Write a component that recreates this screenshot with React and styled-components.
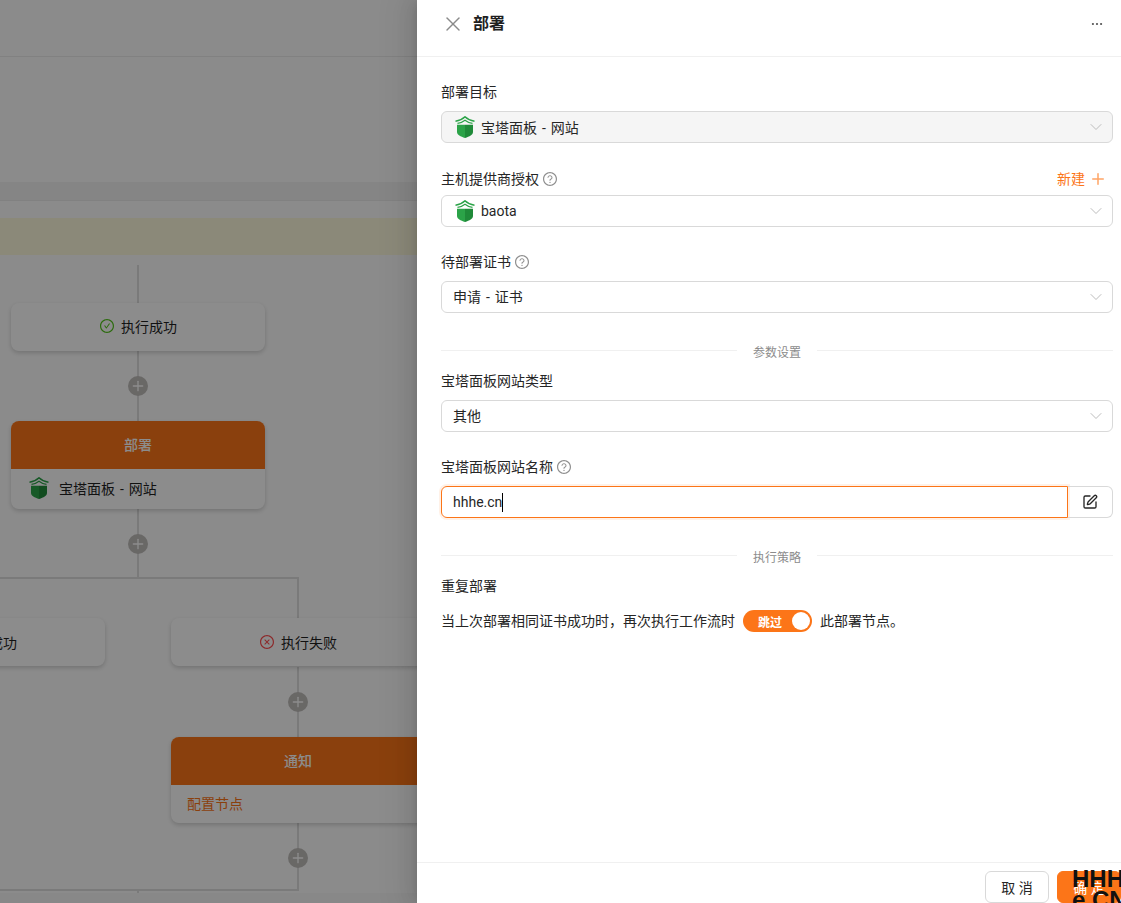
import React from "react";
import styled, { createGlobalStyle } from "styled-components";
import { X, Ellipsis, ChevronDown, Plus, SquarePen } from "lucide-react";
import { AiOutlineQuestionCircle, AiOutlineCheckCircle, AiOutlineCloseCircle } from "react-icons/ai";

const orange = "#fc7518";

const GlobalStyle = createGlobalStyle`
  html, body {
    margin: 0;
    padding: 0;
    overflow: hidden;
  }
  * {
    box-sizing: border-box;
  }
  body {
    font-family: Roboto, "Noto Sans CJK SC", sans-serif;
    font-size: 14px;
    word-spacing: 1.5px;
    color: #1f1f1f;
  }
`;

const Page = styled.div`
  position: relative;
  width: 1121px;
  height: 903px;
  overflow: hidden;
  background: #fefefe;
  display: flex;
  flex-direction: column;
`;

const TopBar = styled.div`
  height: 57px;
  border-bottom: 1px solid #ececec;
`;

const Intro = styled.div`
  height: 125px;
`;

const Band = styled.div`
  height: 19px;
  background: #f2f2f2;
  border-bottom: 1px solid #ececec;
`;

const Gap = styled.div`
  height: 17px;
`;

const Banner = styled.div`
  height: 37px;
  background: #fdf9dc;
`;

const Diagram = styled.div`
  position: relative;
  height: 638px;
`;

const FootBand = styled.div`
  flex: 1;
  background: #f7f7f7;
`;

const VLine = styled.div`
  position: absolute;
  left: ${(p) => p.$x - 1}px;
  top: ${(p) => p.$y - 255}px;
  width: 2px;
  height: ${(p) => p.$h}px;
  background: #dedede;
`;

const HLine = styled.div`
  position: absolute;
  left: 0;
  top: ${(p) => p.$y - 255}px;
  width: 299px;
  height: 2px;
  background: #dedede;
`;

const Node = styled.div`
  position: absolute;
  left: ${(p) => p.$x}px;
  top: ${(p) => p.$y - 255}px;
  width: 254px;
  border-radius: 8px;
  background: #fff;
  box-shadow: 0 2px 5px rgba(0, 0, 0, 0.18);
  overflow: hidden;
`;

const BranchBody = styled.div`
  height: 48px;
  padding-bottom: ${(p) => p.$lift ?? 2}px;
  display: flex;
  align-items: center;
  justify-content: center;
  gap: 6px;
  svg {
    color: ${(p) => p.$color};
  }
`;

const NodeHead = styled.div`
  height: 48px;
  padding-bottom: 2px;
  background: ${orange};
  color: #fff;
  font-weight: 500;
  display: flex;
  align-items: center;
  justify-content: center;
`;

const NodeBody = styled.div`
  height: ${(p) => p.$h}px;
  padding-left: ${(p) => p.$pad}px;
  padding-bottom: 2px;
  display: flex;
  align-items: center;
  gap: 10px;
`;

const Pending = styled.span`
  color: ${orange};
`;

const AddDot = styled.div`
  position: absolute;
  left: ${(p) => p.$x - 10}px;
  top: ${(p) => p.$y - 265}px;
  width: 20px;
  height: 20px;
  border-radius: 50%;
  background: #c0bdbb;
  color: #fff;
  display: flex;
  align-items: center;
  justify-content: center;
`;

const Mask = styled.div`
  position: absolute;
  inset: 0;
  background: rgba(0, 0, 0, 0.45);
`;

const Drawer = styled.aside`
  position: absolute;
  top: 0;
  right: 0;
  bottom: 0;
  width: 704px;
  background: #fff;
  display: flex;
  flex-direction: column;
  box-shadow: -6px 0 16px 0 rgba(0, 0, 0, 0.08), -3px 0 6px -4px rgba(0, 0, 0, 0.12), -9px 0 28px 8px rgba(0, 0, 0, 0.05);
`;

const DrawerHead = styled.header`
  height: 57px;
  flex: none;
  padding: 0 17px 9px 24px;
  border-bottom: 1px solid #f0f0f0;
  display: flex;
  align-items: center;
  gap: 8px;
  > svg:first-child {
    color: #8a8a8a;
  }
  > svg:last-child {
    margin-left: auto;
    color: #555;
  }
`;

const Title = styled.h2`
  margin: 0;
  font-size: 16px;
  line-height: 24px;
  font-weight: 600;
  color: #1f1f1f;
`;

const DrawerBody = styled.div`
  flex: 1;
  padding: 24px 8px 0 24px;
`;

const Item = styled.div`
  margin-bottom: ${(p) => p.$after ?? 24}px;
`;

const LabelRow = styled.div`
  height: 22px;
  margin-bottom: ${(p) => p.$gap ?? 8}px;
  line-height: 22px;
  display: flex;
  align-items: center;
  gap: 3px;
  color: #262626;
  > svg {
    color: #8f8f8f;
  }
`;

const NewLink = styled.span`
  margin-left: auto;
  margin-right: 6px;
  display: flex;
  align-items: center;
  gap: 4px;
  color: ${orange};
  svg {
    color: #ffa465;
  }
`;

const Select = styled.div`
  height: 32px;
  padding: 0 6px 0 ${(p) => (p.$logo ? 13 : 11)}px;
  border: 1px solid #d9d9d9;
  border-radius: 6px;
  background: ${(p) => (p.$disabled ? "#f5f5f5" : "#fff")};
  display: flex;
  align-items: center;
  gap: 6px;
  color: #262626;
  > svg:last-child {
    margin-left: auto;
    color: #bdbdbd;
  }
`;

const SelectText = styled.span`
  margin-bottom: 2px;
`;

const Divider = styled.div`
  height: 22px;
  margin: 26px 0 9px;
  display: flex;
  align-items: center;
  color: #8c8c8c;
  font-size: 12px;
  &::before,
  &::after {
    content: "";
    flex: 1;
    height: 1px;
    background: #f0f0f0;
  }
  span {
    padding: 2px 16px 0;
  }
`;

const InputGroup = styled.div`
  display: flex;
  height: 32px;
`;

const Input = styled.div`
  flex: 1;
  padding: 0 11px;
  border: 1px solid ${orange};
  border-radius: 6px 0 0 6px;
  box-shadow: 0 0 0 2px rgba(252, 117, 24, 0.1);
  display: flex;
  align-items: center;
  color: #262626;
`;

const Caret = styled.span`
  width: 1px;
  height: 19px;
  background: #000;
`;

const AddonButton = styled.div`
  width: 45px;
  border: 1px solid #d9d9d9;
  border-left: 0;
  border-radius: 0 6px 6px 0;
  display: flex;
  align-items: center;
  justify-content: center;
  color: #262626;
`;

const PolicyRow = styled.div`
  height: 32px;
  display: flex;
  align-items: center;
  gap: 8px;
  color: #262626;
`;

const PolicyText = styled.span`
  margin-bottom: 3px;
`;

const Switch = styled.div`
  width: 69px;
  height: 22px;
  padding: 0 2px 0 15px;
  border-radius: 11px;
  background: ${orange};
  display: flex;
  align-items: center;
  justify-content: space-between;
  color: #fff;
  font-size: 12px;
  font-weight: 700;
  &::after {
    content: "";
    width: 18px;
    height: 18px;
    border-radius: 50%;
    background: #fff;
  }
`;

const DrawerFoot = styled.footer`
  height: 41px;
  flex: none;
  padding-top: 8px;
  border-top: 1px solid #f0f0f0;
  display: flex;
  justify-content: flex-end;
  gap: 8px;
`;

const Button = styled.div`
  width: 64px;
  height: 32px;
  border: 1px solid ${(p) => (p.$primary ? orange : "#d9d9d9")};
  border-radius: 6px;
  background: ${(p) => (p.$primary ? orange : "#fff")};
  color: ${(p) => (p.$primary ? "#fff" : "#262626")};
  display: flex;
  align-items: center;
  justify-content: center;
  word-spacing: 0;
`;

const Watermark = styled.div`
  position: absolute;
  left: 1072px;
  top: 868px;
  width: 60px;
  font-family: "Liberation Sans", sans-serif;
  font-size: 24px;
  line-height: 21px;
  font-weight: 700;
  color: #111;
`;

const BaotaLogo = ({ light = "#2ba348", dark = "#1f8a39", line = "#2ba348" }) => (
  <svg width={20} height={22} viewBox="0 0 20 22" fill="none">
    <path d="M0.5 5.2C4.5 4.6 7.8 3 10 0.8C12.2 3 15.5 4.6 19.5 5.2" stroke={line} strokeWidth="1.4" />
    <path d="M2.5 7.4C5.5 7 8 5.8 10 4.2C12 5.8 14.5 7 17.5 7.4" stroke={line} strokeWidth="1.2" />
    <path d="M2 8.8H10V22C5.5 20.6 2 18.8 2 16Z" fill={light} />
    <path d="M18 8.8H10V22C14.5 20.6 18 18.8 18 16Z" fill={dark} />
  </svg>
);

const Help = () => <AiOutlineQuestionCircle size={16} />;

const App = () => {
  const vLines = [
    { x: 138, y: 265, h: 38 },
    { x: 138, y: 351, h: 70 },
    { x: 138, y: 509, h: 69 },
    { x: 298, y: 578, h: 40 },
    { x: 298, y: 667, h: 70 },
    { x: 298, y: 823, h: 67 },
    { x: 138, y: 890, h: 3 },
  ];
  const addDots = [
    { x: 138, y: 386 },
    { x: 138, y: 544 },
    { x: 298, y: 702 },
    { x: 298, y: 858 },
  ];

  return (
    <Page>
      <GlobalStyle />
      <TopBar />
      <Intro />
      <Band />
      <Gap />
      <Banner />
      <Diagram>
        {vLines.map(({ x, y, h }) => (
          <VLine key={`${x}-${y}`} $x={x} $y={y} $h={h} />
        ))}
        <HLine $y={577} />
        <HLine $y={889} />

        <Node $x={11} $y={303}>
          <BranchBody $color="#52c41a">
            <AiOutlineCheckCircle size={16} />
            执行成功
          </BranchBody>
        </Node>

        <Node $x={11} $y={421}>
          <NodeHead>部署</NodeHead>
          <NodeBody $h={40} $pad={18}>
            <BaotaLogo />
            宝塔面板 - 网站
          </NodeBody>
        </Node>

        <Node $x={-149} $y={618}>
          <BranchBody $color="#52c41a" $lift={0}>
            <AiOutlineCheckCircle size={16} />
            执行成功
          </BranchBody>
        </Node>

        <Node $x={171} $y={618}>
          <BranchBody $color="#ff4d4f" $lift={0}>
            <AiOutlineCloseCircle size={16} />
            执行失败
          </BranchBody>
        </Node>

        <Node $x={171} $y={737}>
          <NodeHead>通知</NodeHead>
          <NodeBody $h={38} $pad={16}>
            <Pending>配置节点</Pending>
          </NodeBody>
        </Node>

        {addDots.map(({ x, y }) => (
          <AddDot key={`${x}-${y}`} $x={x} $y={y}>
            <Plus size={16} strokeWidth={2} />
          </AddDot>
        ))}
      </Diagram>
      <FootBand />
      <Mask />

      <Drawer>
        <DrawerHead>
          <X size={24} strokeWidth={1.4} />
          <Title>部署</Title>
          <Ellipsis size={14} strokeWidth={1.8} />
        </DrawerHead>

        <DrawerBody>
          <Item $after={25}>
            <LabelRow>部署目标</LabelRow>
            <Select $disabled $logo>
              <BaotaLogo />
              宝塔面板 - 网站
              <ChevronDown size={20} strokeWidth={1.2} />
            </Select>
          </Item>

          <Item>
            <LabelRow $gap={5}>
              主机提供商授权
              <Help />
              <NewLink>
                新建
                <Plus size={18} strokeWidth={2} />
              </NewLink>
            </LabelRow>
            <Select $logo>
              <BaotaLogo />
              baota
              <ChevronDown size={20} strokeWidth={1.2} />
            </Select>
          </Item>

          <Item>
            <LabelRow>
              待部署证书
              <Help />
            </LabelRow>
            <Select>
              <SelectText>申请 - 证书</SelectText>
              <ChevronDown size={20} strokeWidth={1.2} />
            </Select>
          </Item>

          <Divider>
            <span>参数设置</span>
          </Divider>

          <Item>
            <LabelRow>宝塔面板网站类型</LabelRow>
            <Select>
              <SelectText>其他</SelectText>
              <ChevronDown size={20} strokeWidth={1.2} />
            </Select>
          </Item>

          <Item>
            <LabelRow>
              宝塔面板网站名称
              <Help />
            </LabelRow>
            <InputGroup>
              <Input>
                hhhe.cn
                <Caret />
              </Input>
              <AddonButton>
                <SquarePen size={16} strokeWidth={2} />
              </AddonButton>
            </InputGroup>
          </Item>

          <Divider>
            <span>执行策略</span>
          </Divider>

          <LabelRow>重复部署</LabelRow>
          <PolicyRow>
            <PolicyText>当上次部署相同证书成功时，再次执行工作流时</PolicyText>
            <Switch>跳过</Switch>
            <PolicyText>此部署节点。</PolicyText>
          </PolicyRow>
        </DrawerBody>

        <DrawerFoot>
          <Button>取 消</Button>
          <Button $primary>确 定</Button>
        </DrawerFoot>
      </Drawer>

      <Watermark>
        HHH
        <br />
        e.CN
      </Watermark>
    </Page>
  );
};

export default App;
